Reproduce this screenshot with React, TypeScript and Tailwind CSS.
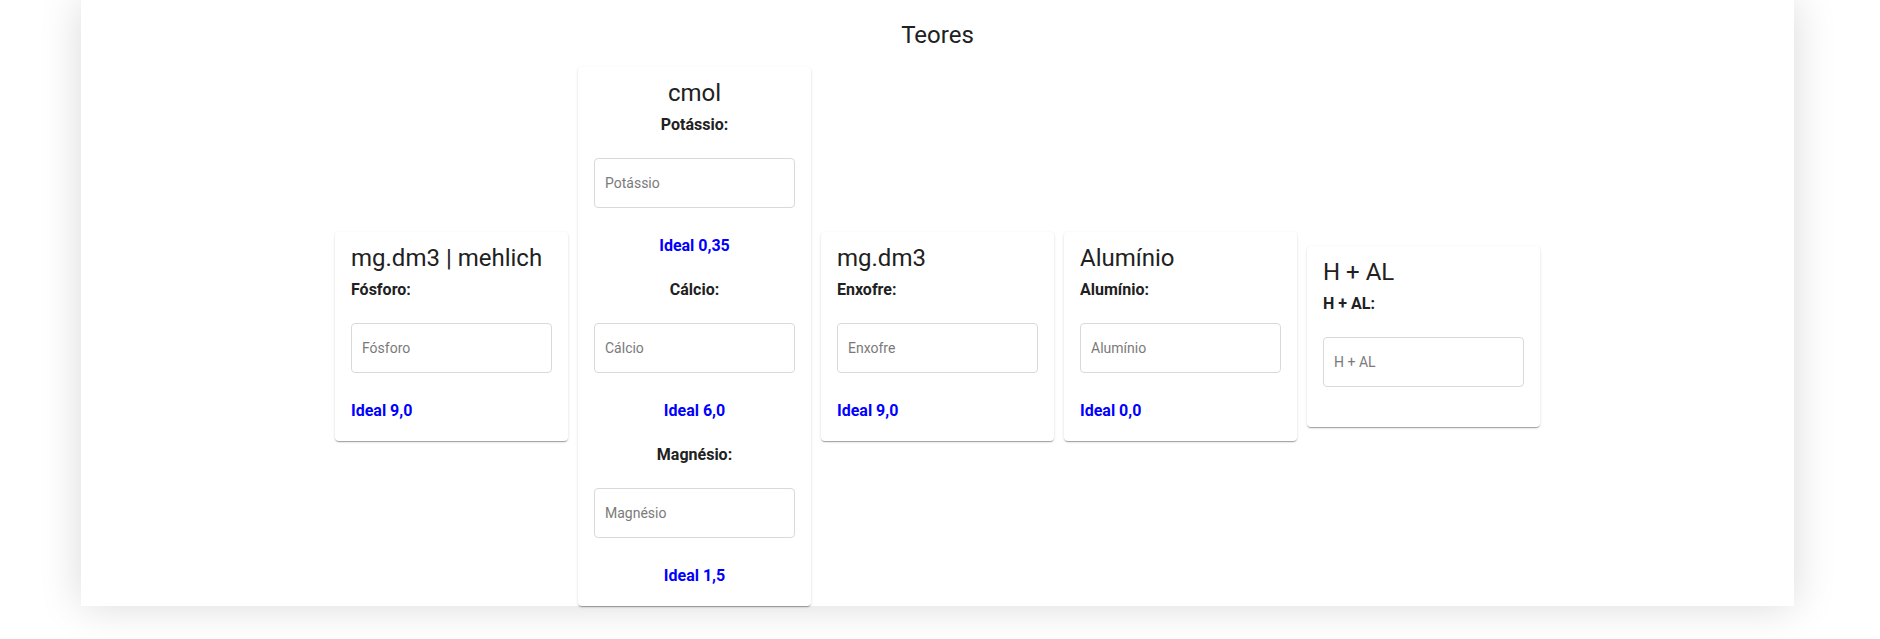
import React from "react";

interface Field {
  label: string;
  placeholder: string;
  ideal?: string;
}

interface TeorCardProps {
  title: string;
  fields: Field[];
  centered?: boolean;
}

const TeorCard: React.FC<TeorCardProps> = ({ title, fields, centered }) => {
  const last = fields[fields.length - 1];
  return (
    <div
      className={`w-[233px] shrink-0 rounded-[4px] bg-white px-4 pt-[10px] shadow-[0px_2px_1px_-1px_rgba(0,0,0,0.2),0px_1px_1px_0px_rgba(0,0,0,0.14),0px_1px_3px_0px_rgba(0,0,0,0.12)] ${
        last.ideal ? "pb-[18px]" : "pb-[40px]"
      } ${centered ? "text-center" : "text-left"}`}
    >
      <h5 className="text-[24px] leading-[32px] font-normal text-[#212121]">{title}</h5>
      <div className="mt-[4px] flex flex-col gap-[20px]">
        {fields.map((f) => (
          <div key={f.label} className="flex flex-col">
            <label className="text-[16px] leading-[24px] font-bold text-[#212121]">{f.label}</label>
            <input
              type="text"
              placeholder={f.placeholder}
              className="mt-[21px] h-[50px] w-full rounded-[4px] border border-[#d9d9d9] bg-white pl-[10px] text-left text-[14px] text-[#212121] outline-none placeholder:text-[#7a7a7a]"
            />
            {f.ideal && (
              <p className="mt-[26px] text-[16px] leading-[24px] font-bold text-[#0000ff]">{f.ideal}</p>
            )}
          </div>
        ))}
      </div>
    </div>
  );
};

export default function App() {
  return (
    <div className="min-h-[639px] w-full bg-white font-['Roboto','Liberation_Sans',sans-serif]">
      {/* Painel */}
      <div className="ml-[81px] w-[1713px] bg-white pt-[19px] shadow-[0_0_40px_rgba(0,0,0,0.15)]">
        <h2 className="text-center text-[24px] leading-[32px] font-normal text-[#212121]">Teores</h2>
        <div className="mt-[16px] flex items-center justify-center gap-[10px]">
          <TeorCard
            title="mg.dm3 | mehlich"
            fields={[{ label: "Fósforo:", placeholder: "Fósforo", ideal: "Ideal 9,0" }]}
          />
          <TeorCard
            title="cmol"
            centered
            fields={[
              { label: "Potássio:", placeholder: "Potássio", ideal: "Ideal 0,35" },
              { label: "Cálcio:", placeholder: "Cálcio", ideal: "Ideal 6,0" },
              { label: "Magnésio:", placeholder: "Magnésio", ideal: "Ideal 1,5" },
            ]}
          />
          <TeorCard
            title="mg.dm3"
            fields={[{ label: "Enxofre:", placeholder: "Enxofre", ideal: "Ideal 9,0" }]}
          />
          <TeorCard
            title="Alumínio"
            fields={[{ label: "Alumínio:", placeholder: "Alumínio", ideal: "Ideal 0,0" }]}
          />
          <TeorCard title="H + AL" fields={[{ label: "H + AL:", placeholder: "H + AL" }]} />
        </div>
      </div>
    </div>
  );
}
